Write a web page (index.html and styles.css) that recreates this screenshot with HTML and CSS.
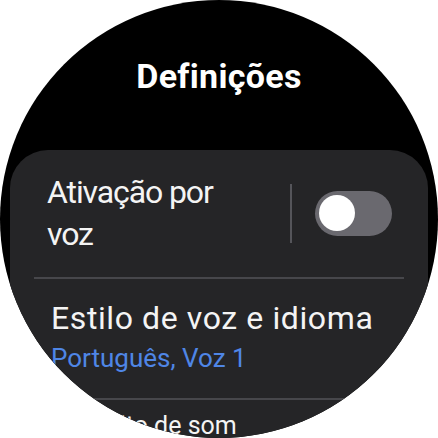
FILE: index.html
```html
<!DOCTYPE html>
<html lang="pt">
<head>
<meta charset="utf-8">
<link rel="stylesheet" href="styles.css">
</head>
<body>
<div class="watch">
  <h1 class="title">Definições</h1>
  <div class="card">
    <div class="row toggle-row">
      <div class="label tight">Ativação por<br>voz</div>
      <div class="vdiv"></div>
      <div class="switch"><div class="knob"></div></div>
    </div>
    <div class="sep"></div>
    <div class="row text-row">
      <div class="label wide">Estilo de voz e idioma</div>
      <div class="sub">Português, Voz 1</div>
    </div>
    <div class="sep sep2"></div>
    <div class="row text-row last">
      <div class="label small">Efeito de som</div>
    </div>
  </div>
</div>
</body>
</html>
```
FILE: styles.css
```css
html, body {
  margin: 0;
  padding: 0;
  background: #ffffff;
}
body {
  width: 438px;
  height: 438px;
  overflow: hidden;
  font-family: Roboto, "Liberation Sans", sans-serif;
}
.watch {
  width: 438px;
  height: 438px;
  border-radius: 50%;
  background: #000;
  overflow: hidden;
  display: flex;
  flex-direction: column;
}
.title {
  flex-shrink: 0;
  margin: 0;
  padding-top: 57px;
  height: 150px;
  box-sizing: border-box;
  color: #fff;
  font-size: 34px;
  font-weight: 700;
  letter-spacing: 0.3px;
  text-align: center;
  line-height: 38px;
}
.card {
  flex-shrink: 0;
  margin: 0 10px;
  background: #252527;
  border-radius: 38px 38px 0 0;
  display: flex;
  flex-direction: column;
  height: 300px;
}
.row {
  display: flex;
  color: #fff;
}
.label {
  font-size: 32px;
  line-height: 42px;
  color: #f4f4f4;
}
.tight {
  letter-spacing: -1.1px;
}
.wide {
  letter-spacing: 0.6px;
}
.toggle-row {
  align-items: center;
  padding: 21px 0 22px 37px;
}
.toggle-row .label {
  flex: 1;
}
.vdiv {
  width: 2px;
  height: 59px;
  background: #55555a;
  margin-right: 23px;
}
.switch {
  width: 77px;
  height: 45px;
  border-radius: 23px;
  background: #6a696f;
  margin-right: 36px;
  display: flex;
  align-items: center;
  padding-left: 4px;
  box-sizing: border-box;
}
.knob {
  width: 36px;
  height: 36px;
  border-radius: 50%;
  background: #fff;
}
.sep {
  flex-shrink: 0;
  height: 2px;
  background: #47474b;
  margin: 0 24px 0 24px;
}
.text-row {
  flex-direction: column;
  padding: 18px 0 0 41px;
}
.sub {
  margin-top: 2px;
  font-size: 26px;
  line-height: 34px;
  color: #4f86e6;
}
.sep2 {
  margin-top: 23px;
  margin-left: 0;
  margin-right: 0;
}
.last {
  padding: 11px 0 0 74px;
}
.small {
  font-size: 25px;
  line-height: 30px;
}
```
